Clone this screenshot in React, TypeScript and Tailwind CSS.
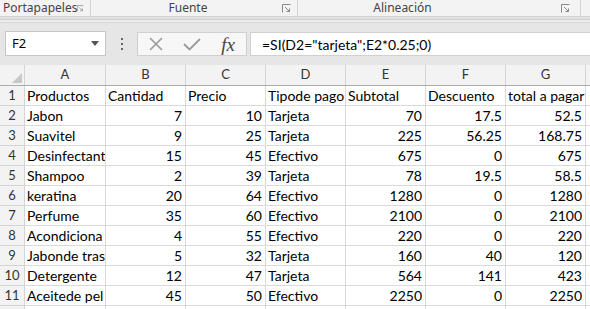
import React from 'react';

const cols = [
    { key: 'A', w: 'w-[81px]' },
    { key: 'B', w: 'w-[80px]' },
    { key: 'C', w: 'w-[80px]' },
    { key: 'D', w: 'w-[80px]' },
    { key: 'E', w: 'w-[80px]' },
    { key: 'F', w: 'w-[80px]' },
    { key: 'G', w: 'w-[80px]' },
];

type Cell = string | number;

const rows: Cell[][] = [
    ['Productos', 'Cantidad', 'Precio', 'Tipode pago', 'Subtotal', 'Descuento', 'total a pagar'],
    ['Jabon', 7, 10, 'Tarjeta', 70, 17.5, 52.5],
    ['Suavitel', 9, 25, 'Tarjeta', 225, 56.25, 168.75],
    ['Desinfectant', 15, 45, 'Efectivo', 675, 0, 675],
    ['Shampoo', 2, 39, 'Tarjeta', 78, 19.5, 58.5],
    ['keratina', 20, 64, 'Efectivo', 1280, 0, 1280],
    ['Perfume', 35, 60, 'Efectivo', 2100, 0, 2100],
    ['Acondiciona', 4, 55, 'Efectivo', 220, 0, 220],
    ['Jabonde tras', 5, 32, 'Tarjeta', 160, 40, 120],
    ['Detergente', 12, 47, 'Tarjeta', 564, 141, 423],
    ['Aceitede pel', 45, 50, 'Efectivo', 2250, 0, 2250],
    ['', '', '', '', '', '', ''],
];

const Launcher = () => (
    <svg width="9" height="9" viewBox="0 0 9 9" className="text-[#8a8a8a]">
        <path d="M0.5 8.5V0.5H8.5" fill="none" stroke="currentColor" strokeWidth="1" />
        <path d="M3 3L7.5 7.5M7.5 4.5V7.5H4.5" fill="none" stroke="currentColor" strokeWidth="1" />
    </svg>
);

export default function App() {
    return (
        <div className="w-[590px] h-[309px] overflow-hidden bg-[#e6e6e6] text-black" style={{ fontFamily: '"Segoe UI", "Noto Sans", sans-serif' }}>
            {/* Ribbon group labels */}
            <div className="h-[17px] bg-[#f3f3f3] flex items-center text-[12px] text-[#444] leading-none border-b border-[#d5d5d5]">
                <div className="w-[91px] h-full flex items-center justify-between pl-[3px] pr-[6px] border-r border-[#d5d5d5]">
                    <span>Portapapeles</span>
                    <Launcher />
                </div>
                <div className="w-[207px] h-full flex items-center border-r border-[#d5d5d5]">
                    <span className="flex-1 text-center pl-[3px]">Fuente</span>
                    <span className="pr-[6px]"><Launcher /></span>
                </div>
                <div className="w-[283px] h-full flex items-center border-r border-[#d5d5d5]">
                    <span className="flex-1 text-center pr-[54px]">Alineación</span>
                    <span className="pr-[10px]"><Launcher /></span>
                </div>
            </div>
            <div className="h-[13px] flex flex-col">
                <div className="h-[2px] bg-[#e1e1e1]" />
                <div className="h-[1px] bg-[#cfcfcf]" />
                <div className="h-[2px] bg-[#ececec]" />
                <div className="h-[1px] bg-[#d6d6d6]" />
                <div className="flex-1 bg-[#e6e6e6]" />
            </div>

            {/* Formula bar */}
            <div className="h-[27px] flex items-start">
                <div className="ml-[5px] w-[101px] h-[25px] mt-[1px] bg-white border border-[#c6c6c6] flex items-center justify-between pl-[6px] pr-[6px] text-[13px]">
                    <span>F2</span>
                    <svg width="8" height="5" viewBox="0 0 8 5"><path d="M0 0H8L4 5Z" fill="#555" /></svg>
                </div>
                <div className="w-[31px] h-[27px] flex flex-col items-center justify-center gap-[3px]">
                    <span className="w-[2px] h-[2px] bg-[#666]" />
                    <span className="w-[2px] h-[2px] bg-[#666]" />
                    <span className="w-[2px] h-[2px] bg-[#666]" />
                </div>
                <div className="w-[110px] h-[24px] mt-[2px] bg-[#f7f7f7] border border-[#d0d0d0] flex items-center">
                    <div className="w-[36px] flex justify-center">
                        <svg width="16" height="14" viewBox="0 0 16 14"><path d="M2 1L14 13M14 1L2 13" stroke="#9a9a9a" strokeWidth="1.6" fill="none" /></svg>
                    </div>
                    <div className="w-[36px] flex justify-center">
                        <svg width="18" height="14" viewBox="0 0 18 14"><path d="M1 7L6.5 12.5L17 2" stroke="#9a9a9a" strokeWidth="1.8" fill="none" /></svg>
                    </div>
                    <div className="w-[36px] flex justify-center text-[19px] text-[#444] italic leading-none" style={{ fontFamily: '"Liberation Serif", serif' }}>
                        fx
                    </div>
                </div>
                <div className="ml-[3px] flex-1 h-[24px] mt-[2px] bg-white border-y border-l border-[#d0d0d0] flex items-center pl-[11px] text-[14px]" style={{ fontFamily: '"Lato", sans-serif' }}>
                    =SI(D2="tarjeta";E2*0.25;0)
                </div>
            </div>
            <div className="h-[8px] bg-[#e6e6e6]" />

            {/* Grid */}
            <div className="bg-white" style={{ fontFamily: '"Lato", sans-serif' }}>
                <div className="flex h-[21px] bg-[#f3f3f3] border-b border-[#ababab] text-[13px] text-[#333]">
                    <div className="w-[25px] shrink-0 border-r border-[#d4d4d4] relative">
                        <svg width="10" height="10" viewBox="0 0 10 10" className="absolute right-[2px] bottom-[2px]"><path d="M10 0V10H0Z" fill="#c8c8c8" /></svg>
                    </div>
                    {cols.map(c => (
                        <div key={c.key} className={`${c.w} shrink-0 border-r border-[#d4d4d4] flex items-center justify-center`}>{c.key}</div>
                    ))}
                    <div className="flex-1" />
                </div>
                {rows.map((r, i) => (
                    <div key={i} className="flex h-[20px] text-[14px] leading-none">
                        <div className="w-[25px] shrink-0 bg-[#f3f3f3] border-r border-b border-[#d4d4d4] flex items-center justify-center text-[13px] text-[#333]">
                            {i < 11 ? i + 1 : ''}
                        </div>
                        {r.map((v, j) => (
                            <div
                                key={j}
                                className={`${cols[j].w} shrink-0 border-r border-b border-[#dadada] flex items-center overflow-hidden whitespace-nowrap ${typeof v === 'number' ? 'justify-end pr-[3px]' : 'pl-[2px]'}`}
                            >
                                {v}
                            </div>
                        ))}
                        <div className="flex-1 border-b border-[#dadada]" />
                    </div>
                ))}
            </div>
        </div>
    );
}
